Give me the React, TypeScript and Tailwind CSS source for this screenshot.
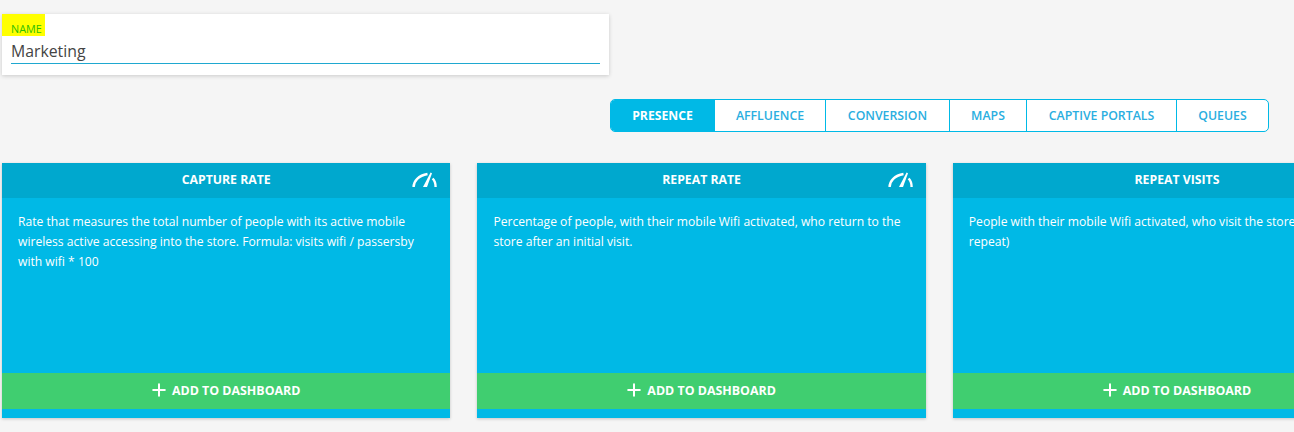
import { Plus } from 'lucide-react'

const tabs = [
    { label: 'PRESENCE', width: 'w-[103px]' },
    { label: 'AFFLUENCE', width: 'w-[111px]' },
    { label: 'CONVERSION', width: 'w-[124px]' },
    { label: 'MAPS', width: 'w-[77px]' },
    { label: 'CAPTIVE PORTALS', width: 'w-[150px]' },
    { label: 'QUEUES', width: 'w-[92px]' },
]

const cards = [
    {
        title: 'CAPTURE RATE',
        text: 'Rate that measures the total number of people with its active mobile wireless active accessing into the store. Formula: visits wifi / passersby with wifi * 100',
        gauge: true,
    },
    {
        title: 'REPEAT RATE',
        text: 'Percentage of people, with their mobile Wifi activated, who return to the store after an initial visit.',
        gauge: true,
    },
    {
        title: 'REPEAT VISITS',
        text: 'People with their mobile Wifi activated, who visit the store (at least one repeat)',
        gauge: false,
    },
]

function GaugeIcon() {
    return (
        <svg width="25" height="15" viewBox="0 0 25 15" fill="none" stroke="white" className="absolute right-[13px] top-[9px]">
            <path d="M1.6 15 C1.6 9 6.5 3.5 15.5 2" strokeWidth="2.4" />
            <path d="M20.6 6.5 C22.6 8.5 23.6 11.5 23.6 15" strokeWidth="2.4" />
            <path d="M11 15 L15 15 L20 1.2 L18.6 0.5 Z" fill="white" stroke="none" />
        </svg>
    )
}

export default function App() {
    return (
        <div className="h-[432px] w-[1294px] overflow-hidden bg-[#f5f5f5] pt-[14px] font-['Open_Sans',sans-serif]">
            <div className="ml-[2px] h-[61px] w-[607px] bg-white px-[9px] shadow-[0_1px_4px_rgba(0,0,0,0.18)]">
                <label className="-ml-[9px] block w-fit bg-[#ffff00] pl-[9px] pr-[3px] pt-[8px] text-[10.8px] leading-[14px] text-[#2fc000]">
                    NAME
                </label>
                <div className="h-[28px] border-b border-[#1fa8d0] pt-[4px] text-[15.8px] leading-[22px] text-[#444444]">
                    Marketing
                </div>
            </div>

            <div className="mt-[24px] flex justify-end pr-[25px]">
                <div className="flex h-[33px] overflow-hidden rounded-[5px] border border-[#00b9e6] bg-white">
                    {tabs.map((tab, i) => (
                        <div
                            key={tab.label}
                            className={
                                i === 0
                                    ? `flex items-center justify-center bg-[#00b9e6] pt-px text-[12.2px] font-bold text-white ${tab.width}`
                                    : `flex items-center justify-center border-l border-[#00b9e6] pt-px text-[12.3px] font-semibold text-[#2aaee0] ${tab.width}`
                            }
                        >
                            {tab.label}
                        </div>
                    ))}
                </div>
            </div>

            <div className="ml-[2px] mt-[31px] flex w-[1500px] gap-[27px]">
                {cards.map((card) => (
                    <div key={card.title} className="flex h-[255px] w-[448.4px] shrink-0 flex-col bg-[#00b9e6] shadow-[0_1px_3px_rgba(0,0,0,0.2)]">
                        <div className="relative flex h-[35px] shrink-0 items-center justify-center bg-[#00a8ce] pb-px text-[12.25px] font-bold text-white">
                            {card.title}
                            {card.gauge && <GaugeIcon />}
                        </div>
                        <p className="h-[175px] shrink-0 px-4 pt-[14px] text-[12.13px] leading-[20px] text-white">{card.text}</p>
                        <div className="flex h-[36px] shrink-0 items-center justify-center gap-[3px] bg-[#40ce70] text-[12.4px] font-bold text-white">
                            <Plus size={20} strokeWidth={2.4} className="-ml-[3px] -mt-[2px]" />
                            ADD TO DASHBOARD
                        </div>
                    </div>
                ))}
            </div>
        </div>
    )
}
